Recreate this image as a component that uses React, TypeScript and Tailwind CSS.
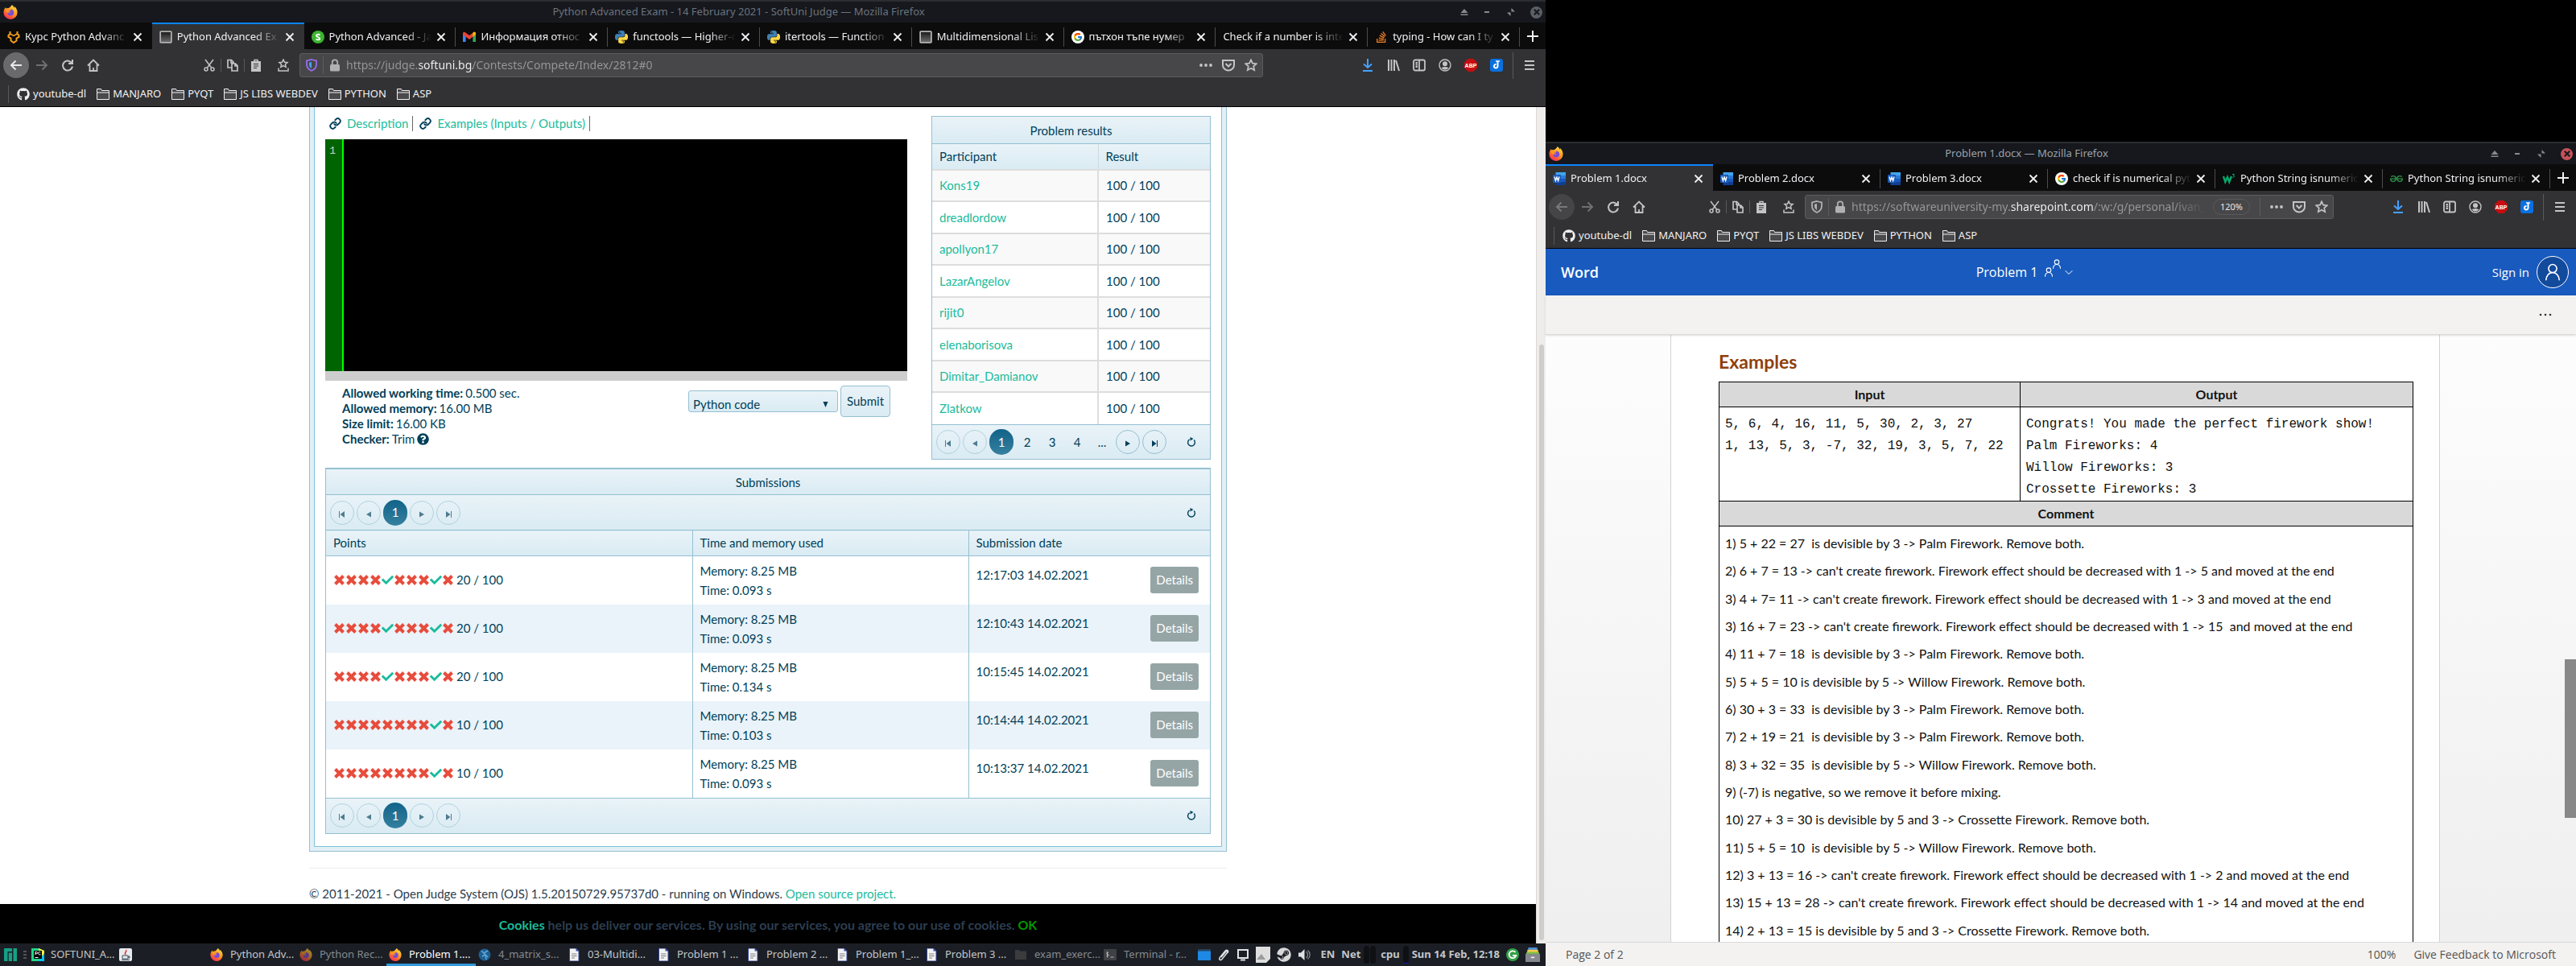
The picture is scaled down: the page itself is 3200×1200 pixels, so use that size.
import type { ReactNode } from "react";
import { FaCheck, FaQuestionCircle, FaGithub, FaStackOverflow, FaSteam } from "react-icons/fa";
import { FcGoogle } from "react-icons/fc";
import { SiGeeksforgeeks } from "react-icons/si";
import { Link as LinkIcon } from "lucide-react";

type Glyph = { className?: string };

/* ---------- brand marks ---------- */

function FirefoxMark({ className = "size-4" }: Glyph) {
  return (
    <svg viewBox="0 0 16 16" className={className} aria-hidden="true">
      <defs>
        <linearGradient id="ffBody" x1="0.8" y1="0" x2="0.2" y2="1">
          <stop offset="0" stopColor="#ffe14d" />
          <stop offset="0.45" stopColor="#ff9a1f" />
          <stop offset="0.8" stopColor="#ff4c3b" />
          <stop offset="1" stopColor="#e3208a" />
        </linearGradient>
      </defs>
      <path
        d="M9.6 0c1.5 1 2.2 2.2 2.5 3.3.3-.4.4-.9.3-1.5 2 1.7 3.2 4 3.2 6.5A7.5 7.5 0 0 1 8 16 7.6 7.6 0 0 1 .4 8.5c0-2.5 1-4.5 2.3-5.9 0 .7.2 1.2.6 1.5C4 3.5 5.2 3.4 6 3.5 7.5 2.8 8.8 1.6 9.6 0Z"
        fill="url(#ffBody)"
      />
      <path d="M8.2 4.9c2 0 3.5 1.5 3.5 3.5a3.5 3.5 0 0 1-7 .1c0-.8.3-1.4.7-1.9.6.5 1.5.3 2.2 0 .5-.2.9-.7.6-1.7Z" fill="#7a4bd6" />
      <path d="M3.3 4.3c1.5-.7 3.3-.2 4.2.9-.2.8-1.7 1-1.8 1.8.7.8 2 .4 2.6.9-1.2 1.3-3.7.9-4.7-.6-.5-.8-.6-2-.3-3Z" fill="#ff9a1f" />
    </svg>
  );
}

function PythonMark({ className = "size-4" }: Glyph) {
  const half =
    "M14.25.18l.9.2.73.26.59.3.45.32.34.34.25.34.16.33.1.3.04.26.02.2-.01.13V8.5l-.05.63-.13.55-.21.46-.26.38-.3.31-.33.25-.35.19-.35.14-.33.1-.3.07-.26.04-.21.02H8.77l-.69.05-.59.14-.5.22-.41.27-.33.32-.27.35-.2.36-.15.37-.1.35-.07.32-.04.27-.02.21v3.06H3.17l-.21-.03-.28-.07-.32-.12-.35-.18-.36-.26-.36-.36-.35-.46-.32-.59-.28-.73-.21-.88-.14-1.05-.05-1.23.06-1.22.16-1.04.24-.87.32-.71.36-.57.4-.44.42-.33.42-.24.4-.16.36-.1.32-.05.24-.01h.16l.06.01h8.16v-.83H6.18l-.01-2.75-.02-.37.05-.34.11-.31.17-.28.25-.26.31-.23.38-.2.44-.18.51-.15.58-.12.64-.1.71-.06.77-.04.84-.02 1.27.05zm-6.3 1.98l-.23.33-.08.41.08.41.23.34.33.22.41.09.41-.09.33-.22.23-.34.08-.41-.08-.41-.23-.33-.33-.22-.41-.09-.41.09z";
  return (
    <svg viewBox="0 0 24 24" className={className} aria-hidden="true">
      <path d={half} fill="#3f7fb5" />
      <path d={half} fill="#ffd845" transform="rotate(180 12 12)" />
    </svg>
  );
}

function WordMark({ className = "size-4" }: Glyph) {
  return (
    <svg viewBox="0 0 16 16" className={className} aria-hidden="true">
      <path d="M3.5 0H16v4H3.5z" fill="#41a5ee" />
      <path d="M3.5 4H16v4H3.5z" fill="#2b7cd3" />
      <path d="M3.5 8H16v4H3.5z" fill="#185abd" />
      <path d="M3.5 12H16v4H3.5z" fill="#103f91" />
      <rect y="3" width="10" height="10" rx="0.8" fill="#185abd" />
      <path d="m2 5.5 1.4 5L5 6l1.6 4.5 1.4-5" stroke="#fff" strokeWidth="1.4" fill="none" />
    </svg>
  );
}

function GmailMark({ className = "size-4" }: Glyph) {
  return (
    <svg viewBox="0 0 16 16" className={className} aria-hidden="true">
      <path d="M0 3.5V14h3.6V6z" fill="#4285f4" />
      <path d="M16 3.5V14h-3.6V6z" fill="#34a853" />
      <path d="M0 3.5C0 2 1.7 1.3 2.9 2.2L8 6l5.1-3.8C14.3 1.3 16 2 16 3.5V5L8 11 0 5z" fill="#ea4335" />
      <path d="M12.4 2.8 13.1 2.2C14.3 1.3 16 2 16 3.5V5l-3.6 2.7z" fill="#fbbc04" />
    </svg>
  );
}

function SoftUniMark({ className = "size-4" }: Glyph) {
  return (
    <svg viewBox="0 0 16 16" className={className} fill="none" stroke="#f5a01c" strokeWidth="2" aria-hidden="true">
      <path d="M3.5 1v3L1.5 6v2l3 1.5v3L8 15l3.5-2.5v-3l3-1.5V6l-2-2V1" />
      <path d="M3.5 4 8 6.5 12.5 4" strokeWidth="1.5" />
    </svg>
  );
}

function JudgeMark({ className = "size-4" }: Glyph) {
  return (
    <svg viewBox="0 0 16 16" className={className} aria-hidden="true">
      <defs>
        <linearGradient id="judgeScreen" x1="0" y1="0" x2="0" y2="1">
          <stop offset="0" stopColor="#1d1d1d" />
          <stop offset="1" stopColor="#6a6a6a" />
        </linearGradient>
      </defs>
      <rect x="0.5" y="0.5" width="15" height="15" rx="1.5" fill="#b4b4b4" stroke="#8a8a8a" />
      <rect x="2" y="2" width="12" height="12" fill="url(#judgeScreen)" />
    </svg>
  );
}

function GreenS({ className = "size-4" }: Glyph) {
  return (
    <svg viewBox="0 0 16 16" className={className} aria-hidden="true">
      <circle cx="8" cy="8" r="8" fill="#3cb52f" />
      <path d="M10.3 5.6C9.5 4.5 5.9 4.3 5.9 6.3S10.2 8 10.2 9.9s-3.6 1.9-4.6.5" stroke="#fff" strokeWidth="1.8" fill="none" />
    </svg>
  );
}

function W3Mark({ className = "size-4" }: Glyph) {
  return (
    <svg viewBox="0 0 16 16" className={className} fill="none" stroke="#04aa6d" aria-hidden="true">
      <path d="m1 5 2.3 7L6 6l2.3 6L11 5" strokeWidth="2.4" />
      <path d="M12 2.5h2.5L13.3 4c1.8 0 1.8 2.5-.8 2.2" strokeWidth="1" />
    </svg>
  );
}

function GoogleMark() {
  return (
    <span className="flex size-4 shrink-0 items-center justify-center rounded-full bg-white">
      <FcGoogle className="size-3" />
    </span>
  );
}

/* ---------- toolbar glyphs ---------- */

function Line({ children, className = "size-4", width = 2 }: { children: ReactNode; className?: string; width?: number }) {
  return (
    <svg viewBox="0 0 16 16" className={className} fill="none" stroke="currentColor" strokeWidth={width} aria-hidden="true">
      {children}
    </svg>
  );
}

const BackGlyph = () => <Line><path d="M15 8H2M7.5 2.5 2 8l5.5 5.5" /></Line>;
const ForwardGlyph = () => <Line><path d="M1 8h13M8.5 2.5 14 8l-5.5 5.5" /></Line>;
const ReloadGlyph = () => <Line><path d="M14 1v5H9M13.5 6A6 6 0 1 0 14 9.5" /></Line>;
const HomeGlyph = () => <Line width={1.8}><path d="M1 8.5 8 1.5l7 7M3.5 7v8h9V7M8 15v-4" /></Line>;
const CutGlyph = () => (
  <Line width={1.5}><path d="M3 1l7.5 10M13 1 5.5 11" /><circle cx="4" cy="13" r="2" /><circle cx="12" cy="13" r="2" /></Line>
);
const CopyGlyph = () => <Line width={1.7}><path d="M7 11H2V1.5h4.5L9 4v2M7 6h4.5L14 8.5V15H7zM6 2v3h3M11 6.5V9h3" /></Line>;
const PasteGlyph = () => (
  <svg viewBox="0 0 16 16" className="size-4" fill="none" stroke="currentColor" aria-hidden="true">
    <path d="M3 4h10v11H3z" fill="currentColor" strokeWidth="2" />
    <path d="M6 4V1.5h4V4" strokeWidth="1.5" />
    <path d="M5 6.5h6M5 9h6M5 11.5h4" stroke="#323234" />
  </svg>
);
const StarTrayGlyph = () => (
  <Line width={1.5}><path d="m8 1 1.5 3.2 3.5.4-2.6 2.3.7 3.4L8 8.6l-3.1 1.7.7-3.4L3 4.6l3.5-.4zM2 11.5V15h12v-3.5" /></Line>
);
const LockGlyph = () => (
  <svg viewBox="0 0 16 16" className="size-4" aria-hidden="true">
    <rect x="2" y="7" width="12" height="8.5" rx="1.5" fill="currentColor" />
    <path d="M4.8 7.5V4.5a3.2 3.2 0 0 1 6.4 0v3" stroke="currentColor" strokeWidth="1.8" fill="none" />
  </svg>
);
const DotsGlyph = () => (
  <svg viewBox="0 0 16 16" className="size-4" fill="currentColor" aria-hidden="true">
    <circle cx="2" cy="8" r="1.9" /><circle cx="8" cy="8" r="1.9" /><circle cx="14" cy="8" r="1.9" />
  </svg>
);
const PocketGlyph = () => <Line><path d="M1 2h14v6a7 6.5 0 0 1-14 0zM4.5 6 8 9.5 11.5 6" /></Line>;
const StarGlyph = () => <Line width={1.7}><path d="m8 1.3 2 4.4 4.8.5-3.6 3.2 1 4.8L8 11.8l-4.2 2.4 1-4.8-3.6-3.2 4.8-.5z" /></Line>;
const DownloadGlyph = () => <Line className="size-4 text-[#45a1ff]"><path d="M8 0v11M3 6.5 8 11l5-4.5M2 15h12" /></Line>;
const LibraryGlyph = () => <Line><path d="M2 1v14M5.5 1v14M9 1v14M11 2l4 13" /></Line>;
const SidebarGlyph = () => <Line width={1.8}><rect x="1" y="1.5" width="14" height="13" rx="2" /><path d="M8 2v12M3.5 5H6M3.5 7.5H6M3.5 10H6" /></Line>;
const AccountGlyph = () => (
  <svg viewBox="0 0 16 16" className="size-4" aria-hidden="true">
    <circle cx="8" cy="8" r="7" fill="none" stroke="currentColor" strokeWidth="1.4" />
    <circle cx="8" cy="6.2" r="3" fill="currentColor" />
    <path d="M3.5 11c1.5 0 2.5-1 4.5-1s3 1 4.5 1c-1 1.7-2.6 2.6-4.5 2.6S4.5 12.7 3.5 11Z" fill="currentColor" />
  </svg>
);
const AbpGlyph = () => (
  <svg viewBox="0 0 16 16" className="size-4" aria-hidden="true">
    <path d="M4.7 0h6.6L16 4.7v6.6L11.3 16H4.7L0 11.3V4.7z" fill="#c70d12" />
    <text x="8" y="10.8" textAnchor="middle" fontSize="7" fontWeight="700" fill="#fff" fontFamily="Liberation Sans, sans-serif">ABP</text>
  </svg>
);
const DownloaderGlyph = () => (
  <svg viewBox="0 0 16 16" className="size-4" aria-hidden="true">
    <rect width="16" height="16" rx="3" fill="#0a70e0" />
    <path d="M9.5 3v6.5a2.3 2.3 0 1 1-2-2.5" stroke="#fff" strokeWidth="2" fill="none" />
    <path d="M7 3h5" stroke="#fff" strokeWidth="1.5" />
  </svg>
);
const MenuGlyph = () => <Line><path d="M2 3h12M2 8h12M2 13h12" /></Line>;
const FolderGlyph = () => <Line width={1}><path d="M.5 14.5v-13h5l1 2h9v11zM.5 6h15" fill="#4a4a4c" /></Line>;
const CloseGlyph = () => <Line className="size-3" width={2.4}><path d="m2 2 12 12M14 2 2 14" /></Line>;

/* ---------- Firefox window ---------- */

type TabInfo = { title: string; icon?: ReactNode; active?: boolean };

function WindowTitle({ text, focused }: { text: string; focused: boolean }) {
  return (
    <header className={`flex h-7 shrink-0 items-center border-t-2 border-[#2b2d31] bg-[#16181d] pr-1 pl-1 ${focused ? "text-[#9aa1aa]" : "text-[#6c737d]"}`}>
      <FirefoxMark className="size-[18px]" />
      <h1 className="flex-1 text-center text-[13px]">{text}</h1>
      <div className="flex items-center gap-4 text-[#858a92]">
        <button aria-label="Shade" className="flex size-3 items-center justify-center">
          <svg viewBox="0 0 10 10" className="size-[10px]" fill="currentColor"><path d="M5 1l4.5 5h-9zM.5 7.5h9V9h-9z" /></svg>
        </button>
        <button aria-label="Minimize" className="flex size-3 items-center justify-center">
          <svg viewBox="0 0 10 10" className="size-[10px]" fill="currentColor"><path d="M2 4h6v2H2z" /></svg>
        </button>
        <button aria-label="Restore" className="flex size-4 items-center justify-center">
          <svg viewBox="0 0 10 10" className="size-[10px]" fill="currentColor"><path d="M5.5 0v4.500H10zM0 5.500h4.500V10z" /></svg>
        </button>
        <button aria-label="Close window" className={`flex size-[15px] items-center justify-center rounded-full text-[#16181d] ${focused ? "bg-[#c7525a]" : "bg-[#5b5f66]"}`}>
          <svg viewBox="0 0 10 10" className="size-2" stroke="currentColor" strokeWidth="2.5"><path d="m1 1 8 8M9 1 1 9" /></svg>
        </button>
      </div>
    </header>
  );
}

function TabStrip({ tabs }: { tabs: TabInfo[] }) {
  return (
    <nav aria-label="Tabs" className="flex h-[33px] shrink-0 bg-[#0c0c0d] text-[#f0f0f2]">
      {tabs.map((tab, i) => {
        const divider = !tab.active && !tabs[i + 1]?.active;
        return (
          <div
            key={tab.title + i}
            className={`relative flex min-w-0 flex-1 items-center border-t-2 pr-[10px] pl-[9px] ${tab.active ? "border-[#0a84ff] bg-[#323234]" : "border-transparent"}`}
          >
            <button className="flex min-w-0 flex-1 items-center gap-1.5 text-left text-[13px]">
              {tab.icon}
              <span className="min-w-0 flex-1 overflow-hidden whitespace-nowrap [mask-image:linear-gradient(to_right,black_75%,transparent)]">{tab.title}</span>
            </button>
            <button aria-label={`Close ${tab.title}`} className="ml-1 flex size-4 shrink-0 items-center justify-center"><CloseGlyph /></button>
            {divider && <span className="absolute top-1 right-0 h-6 w-px bg-[#4c4c4e]" />}
          </div>
        );
      })}
      <button aria-label="New tab" className="flex w-8 shrink-0 items-center justify-center">
        <Line className="size-4"><path d="M8 1v14M1 8h14" /></Line>
      </button>
    </nav>
  );
}

const Divider = ({ tall = false }: { tall?: boolean }) => (
  <span className={tall ? "h-[33px] w-px bg-[#59595b]" : "h-4 w-px bg-[#59595b]"} />
);

function IconButton({ label, children, dim }: { label: string; children: ReactNode; dim?: boolean }) {
  return (
    <button aria-label={label} className={`flex w-8 shrink-0 items-center justify-center ${dim ? "text-[#6f6f71]" : ""}`}>
      {children}
    </button>
  );
}

function NavigationBar({ url, urlStyle, secure, zoom, spacer, canGoBack }: {
  url: string; urlStyle: string; secure: boolean; zoom?: string; spacer: string; canGoBack: boolean;
}) {
  return (
    <div className="flex h-10 shrink-0 items-center bg-[#323234] pl-1 text-[#c4c4c6]">
      <button aria-label="Back" className={`flex size-8 shrink-0 items-center justify-center rounded-full ${canGoBack ? "bg-[#6a6a6c] text-[#e8e8ea]" : "bg-[#454547] text-[#79797b]"}`}><BackGlyph /></button>
      <IconButton label="Forward" dim><ForwardGlyph /></IconButton>
      <IconButton label="Reload"><ReloadGlyph /></IconButton>
      <IconButton label="Home"><HomeGlyph /></IconButton>
      <span className={`shrink-0 ${spacer}`} />
      <button aria-label="Cut" className="flex w-7 shrink-0 items-center justify-center"><CutGlyph /></button>
      <Divider />
      <button aria-label="Copy" className="flex w-7 shrink-0 items-center justify-center"><CopyGlyph /></button>
      <Divider />
      <button aria-label="Paste" className="flex w-7 shrink-0 items-center justify-center"><PasteGlyph /></button>
      <span className="w-1" />
      <IconButton label="Bookmarks menu"><StarTrayGlyph /></IconButton>
      <form className="ml-1 flex h-[30px] min-w-0 flex-1 items-center rounded-[3px] border border-[#5c5c5e] bg-[#474749]">
        <button type="button" aria-label="Tracking protection" className="flex w-7 shrink-0 items-center justify-center">
          <svg viewBox="0 0 16 16" className="size-4" fill="none" stroke={secure ? "#9a6cf0" : "#b1b1b3"} strokeWidth="1.8" aria-hidden="true">
            <path d="M8 1 14 2.5v4.5c0 4-2.5 6.5-6 8-3.5-1.5-6-4-6-8V2.5z" />
            <path d="M8 4v8C6 11 5 9 5 7V4.8z" fill={secure ? "#45a1ff" : "#b1b1b3"} stroke="none" />
          </svg>
        </button>
        <span className="h-[22px] w-px bg-[#5c5c5e]" />
        <button type="button" aria-label="Site information" className="flex w-7 shrink-0 items-center justify-center text-[#b1b1b3]"><LockGlyph /></button>
        <label className="flex min-w-0 flex-1">
          <span className="sr-only">Address</span>
          <input type="text" defaultValue={url} className={`w-full bg-clip-text text-[14px] leading-6 text-transparent outline-none ${urlStyle}`} />
        </label>
        {zoom && (
          <>
            <button type="button" className="mx-3 rounded-full border border-[#59595b] px-2 text-[11px] leading-[18px] text-[#e8e8ea]">{zoom}</button>
            <span className="mr-1.5 h-[22px] w-px bg-[#5c5c5e]" />
          </>
        )}
        <button type="button" aria-label="Page actions" className="flex w-7 shrink-0 items-center justify-center"><DotsGlyph /></button>
        <button type="button" aria-label="Save to Pocket" className="flex w-7 shrink-0 items-center justify-center"><PocketGlyph /></button>
        <button type="button" aria-label="Bookmark page" className="flex w-7 shrink-0 items-center justify-center"><StarGlyph /></button>
      </form>
      <span className={`shrink-0 ${spacer}`} />
      <IconButton label="Downloads"><DownloadGlyph /></IconButton>
      <IconButton label="Library"><LibraryGlyph /></IconButton>
      <IconButton label="Sidebars"><SidebarGlyph /></IconButton>
      <IconButton label="Account"><AccountGlyph /></IconButton>
      <IconButton label="Adblock Plus"><AbpGlyph /></IconButton>
      <IconButton label="Downloader"><DownloaderGlyph /></IconButton>
      <span className="w-1" />
      <Divider tall />
      <button aria-label="Menu" className="flex w-10 shrink-0 items-center justify-center"><MenuGlyph /></button>
    </div>
  );
}

const bookmarks = ["MANJARO", "PYQT", "JS LIBS WEBDEV", "PYTHON", "ASP"];

function BookmarksBar() {
  return (
    <nav aria-label="Bookmarks" className="flex h-8 shrink-0 items-center border-b border-black bg-[#323234] pl-[10px] text-[13px] text-[#f0f0f2]">
      <span className="h-[22px] w-px bg-[#59595b]" />
      <a href="#youtube-dl" className="ml-[10px] flex items-center gap-1">
        <FaGithub className="size-4" />youtube-dl
      </a>
      {bookmarks.map((name) => (
        <button key={name} className="ml-[13px] flex items-center gap-1"><FolderGlyph />{name}</button>
      ))}
    </nav>
  );
}

/* ---------- judge page ---------- */

const band = "bg-linear-to-b from-[#e9f3f8] to-[#daebf3]";

type PagerSign = "first" | "prev" | "next" | "last";

const pagerPaths: Record<PagerSign, string> = {
  first: "M1 1h1v8H1zM8 1v8L2.5 5z",
  prev: "M8 1.5v7L2 5z",
  next: "M2 1.5v7L8 5z",
  last: "M2 1v8l5.5-4zM8 1h1v8H8z",
};

function PagerArrow({ sign, faded }: { sign: PagerSign; faded?: boolean }) {
  return (
    <button aria-label={`${sign} page`} disabled={faded} className={`flex size-[30px] items-center justify-center rounded-full border border-[#94c0d2] ${faded ? "opacity-65" : ""}`}>
      <svg viewBox="0 0 10 10" className="mt-1 size-[10px]" fill="#003f59"><path d={pagerPaths[sign]} /></svg>
    </button>
  );
}

const CurrentPage = () => (
  <button aria-current="page" className="flex h-8 w-[30px] items-center justify-center rounded-full bg-linear-to-b from-[#0f6389] to-[#35809f] text-white">1</button>
);

const Refresh = () => (
  <button aria-label="Refresh" className="mr-[17px] ml-auto text-[#003f59]">
    <svg viewBox="0 0 12 12" className="size-3" fill="none" stroke="currentColor" strokeWidth="1.4">
      <path d="M9.2 3.6A4.4 4.4 0 1 1 3.6 2.9" /><path d="M4.5 0v4.5L8.500 2z" fill="currentColor" stroke="none" />
    </svg>
  </button>
);

const participants = ["Kons19", "dreadlordow", "apollyon17", "LazarAngelov", "rijit0", "elenaborisova", "Dimitar_Damianov", "Zlatkow"];

function ProblemResults() {
  return (
    <section className="flex w-[347px] shrink-0 flex-col border border-[#94c0d2]">
      <h2 className={`h-[34px] border-b border-[#94c0d2] text-center leading-[34px] ${band}`}>Problem results</h2>
      <table className="w-full border-collapse text-left">
        <thead>
          <tr className={`h-8 ${band}`}>
            <th className="w-[206px] border-r border-[#cfd9de] px-[9px] font-normal">Participant</th>
            <th className="px-[9px] font-normal">Result</th>
          </tr>
        </thead>
        <tbody>
          {participants.map((name) => (
            <tr key={name} className="border-t-2 border-[#ddd] odd:h-[39px] odd:bg-[#f9f9f9] even:h-10">
              <td className="border-r-2 border-[#ddd] px-[9px]"><a href={`#${name}`} className="text-[#1abc9c]">{name}</a></td>
              <td className="px-[9px]">100 / 100</td>
            </tr>
          ))}
        </tbody>
      </table>
      <div className={`flex h-[43px] items-center gap-[3px] border-t border-[#94c0d2] pl-[5px] ${band}`}>
        <PagerArrow sign="first" faded />
        <PagerArrow sign="prev" faded />
        <CurrentPage />
        {["2", "3", "4", "..."].map((page) => (
          <button key={page} className="w-7">{page}</button>
        ))}
        <PagerArrow sign="next" />
        <PagerArrow sign="last" />
        <Refresh />
      </div>
    </section>
  );
}

const submissions = [
  { tests: "xxxxvxxxvx", points: 20, time: "0.093", date: "12:17:03 14.02.2021" },
  { tests: "xxxxvxxxvx", points: 20, time: "0.093", date: "12:10:43 14.02.2021" },
  { tests: "xxxxvxxxvx", points: 20, time: "0.134", date: "10:15:45 14.02.2021" },
  { tests: "xxxxxxxxvx", points: 10, time: "0.103", date: "10:14:44 14.02.2021" },
  { tests: "xxxxxxxxvx", points: 10, time: "0.093", date: "10:13:37 14.02.2021" },
];

const FailedTest = () => (
  <svg viewBox="0 0 15 15" className="size-[15px]" fill="none" stroke="#e74c3c" strokeWidth="4" aria-label="failed test">
    <path d="m2.500 2.500 10 10M12.500 2.500l-10 10" />
  </svg>
);

function SubmissionsPager() {
  return (
    <div className={`flex h-[43px] items-center gap-[3px] pl-[5px] ${band}`}>
      <PagerArrow sign="first" faded />
      <PagerArrow sign="prev" faded />
      <CurrentPage />
      <PagerArrow sign="next" faded />
      <PagerArrow sign="last" faded />
      <Refresh />
    </div>
  );
}

function Submissions() {
  return (
    <section className="mt-[10px] border border-t-2 border-[#94c0d2]">
      <h2 className={`h-8 border-b border-[#94c0d2] text-center leading-8 ${band}`}>Submissions</h2>
      <SubmissionsPager />
      <table className="w-full table-fixed border-collapse text-left">
        <thead>
          <tr className={`h-8 border-y border-[#94c0d2] ${band}`}>
            <th className="w-[455px] border-r border-[#94c0d2] px-[9px] font-normal">Points</th>
            <th className="w-[343px] border-r border-[#94c0d2] px-[9px] font-normal">Time and memory used</th>
            <th className="px-[9px] font-normal">Submission date</th>
          </tr>
        </thead>
        <tbody>
          {submissions.map((s) => (
            <tr key={s.date} className="h-[60px] even:bg-[#eaf3f9]">
              <td className="border-r border-[#94c0d2] px-[9px]">
                <div className="flex items-center">
                  {[...s.tests].map((t, i) => (t === "v" ? <FaCheck key={i} className="size-[15px] text-[#1abc9c]" /> : <FailedTest key={i} />))}
                  <span className="ml-[3px]">{s.points} / 100</span>
                </div>
              </td>
              <td className="border-r border-[#94c0d2] px-[9px] leading-6">
                <p>Memory: 8.25 MB</p>
                <p>Time: {s.time} s</p>
              </td>
              <td className="px-[9px]">
                <div className="flex justify-between pr-[5px]">
                  <span>{s.date}</span>
                  <button className="rounded-[3px] bg-[#95a5a6] px-[7px] py-1.5 leading-[21px] text-white">Details</button>
                </div>
              </td>
            </tr>
          ))}
        </tbody>
      </table>
      <div className="border-t border-[#94c0d2]"><SubmissionsPager /></div>
    </section>
  );
}

const limits = [
  ["Allowed working time:", "0.500 sec."],
  ["Allowed memory:", "16.00 MB"],
  ["Size limit:", "16.00 KB"],
  ["Checker:", "Trim"],
];

function CodePanel() {
  return (
    <section className="min-w-0 flex-1">
      <nav aria-label="Resources" className="flex h-[19px] items-center pl-[5px]">
        {["Description", "Examples (Inputs / Outputs)"].map((label) => (
          <span key={label} className="mr-2 flex h-[19px] items-center border-r border-[#666] pr-[5px]">
            <LinkIcon className="mr-[7px] size-[15px]" strokeWidth={3} />
            <a href={`#${label}`} className="text-[#1abc9c]">{label}</a>
          </span>
        ))}
      </nav>
      <div className="mt-[10px] flex h-72 bg-black">
        <div className="w-[23px] border-r-2 border-[#00ff00] bg-[#006400] pt-1 pr-2 text-right font-['Liberation_Mono',monospace] text-[13px] text-[#d0d0d0]">1</div>
        <textarea aria-label="Code" spellCheck={false} className="flex-1 resize-none bg-black p-1 font-['Liberation_Mono',monospace] text-[13px] text-[#f8f8f8] outline-none" />
      </div>
      <div className="h-3 bg-[#cdcdcd]" />
      <div className="flex items-start px-[21px]">
        <dl className="mt-1.5 flex-1 leading-[19px]">
          {limits.map(([name, value]) => (
            <div key={name} className="flex items-center gap-[3px]">
              <dt className="font-bold">{name}</dt>
              <dd>{value}</dd>
              {value === "Trim" && <FaQuestionCircle aria-label="Checker help" className="size-[15px]" />}
            </div>
          ))}
        </dl>
        <div className="mt-1.5 flex items-end gap-[3px]">
          <label className="relative mb-1.5 flex">
            <span className="sr-only">Language</span>
            <select className={`h-[27px] w-[186px] appearance-none rounded-[3px] border border-[#94c0d2] px-[5px] pt-1.5 ${band}`}>
              <option>Python code</option>
            </select>
            <svg viewBox="0 0 8 8" className="pointer-events-none absolute top-[14px] right-3 size-[7px]" fill="#003f59"><path d="M.5 0h7L4 8z" /></svg>
          </label>
          <button className={`h-[39px] w-[62px] rounded border border-[#94c0d2] ${band}`}>Submit</button>
        </div>
      </div>
    </section>
  );
}

function JudgePage() {
  return (
    <div className="flex min-h-0 flex-1 bg-white">
      <div className="flex min-w-0 flex-1 flex-col">
        <main className="mx-auto flex min-h-0 w-full max-w-[1140px] flex-1 flex-col overflow-hidden font-['Lato',sans-serif] text-[15px] leading-[21px] text-[#003f59]">
          <div className="border border-t-0 border-[#94c0d2] bg-[#e2eff6] px-[5px] pb-[5px]">
            <div className="border border-t-0 border-[#7cc3dc] bg-white px-[13px] pt-[11px] pb-[15px]">
              <div className="flex items-start gap-[30px]">
                <CodePanel />
                <ProblemResults />
              </div>
              <Submissions />
            </div>
          </div>
          <footer className="mt-5 border-t border-[#eee] pt-[21px] text-[#2c3e50]">
            © 2011-2021 - Open Judge System (OJS) 1.5.20150729.95737d0 - running on Windows. <a href="#source" className="text-[#1abc9c]">Open source project.</a>
          </footer>
        </main>
        <p className="h-[49px] shrink-0 bg-black text-center font-['Lato',sans-serif] text-[16px] leading-[52px] font-bold text-[#2c3e50]">
          <a href="#cookies" className="text-[#1abc9c]">Cookies</a> help us deliver our services. By using our services, you agree to our use of cookies. <button className="text-[#090]">OK</button>
        </p>
      </div>
      <div className="flex w-3 shrink-0 flex-col border-l border-[#dad8d6] bg-[#eeedec] px-0.5 pb-1">
        <span className="mt-auto h-[740px] w-1.5 self-center rounded-full bg-[#cfcdcc]" />
      </div>
    </div>
  );
}

/* ---------- taskbar ---------- */

const DocIcon = () => (
  <svg viewBox="0 0 16 16" className="size-4" aria-hidden="true">
    <path d="M2.5 0h8L14 3.5V16H2.5z" fill="#f2f2f2" stroke="#33479f" />
    <path d="M10.5 0 14 3.5h-3.5z" fill="#33479f" />
    <path d="M5 7h6.5M5 9.5h6.5M5 12h4" stroke="#7a7a7a" />
  </svg>
);

const PyCharmIcon = () => (
  <svg viewBox="0 0 16 16" className="size-4" aria-hidden="true">
    <path d="M0 0h9l7 3v13H0z" fill="#21d789" /><path d="M9 0l7 3v8l-5 5z" fill="#fcf84a" /><path d="M16 6v10H8z" fill="#07c3f2" />
    <rect x="3" y="3" width="10" height="10" /><path d="M5 8V4.5h1.5a1 1 0 0 1 0 2.2H5M11.5 5a1.7 1.7 0 1 0 0 2.5M4.5 11.5h4" stroke="#fff" fill="none" />
  </svg>
);

const GlobeIcon = () => (
  <svg viewBox="0 0 16 16" className="size-4" aria-hidden="true">
    <circle cx="8" cy="8" r="7.5" fill="#1e5f92" /><path d="M4 3l5 5-4 2M12 3 7 6l5 5M9 8l1 6" stroke="#5fa8d8" strokeWidth="1.5" fill="none" />
  </svg>
);

const FolderIcon = () => (
  <svg viewBox="0 0 16 16" className="size-4" aria-hidden="true"><path d="M1 2h5l1 1.5h8V14H1z" fill="#3a3b3d" /></svg>
);

const TerminalIcon = () => (
  <svg viewBox="0 0 16 16" className="size-4" aria-hidden="true">
    <rect y="1" width="16" height="14" rx="1" fill="#3f4144" /><path d="M6 5.5c-3-1-3 2-1 2s2 3-1.5 2M4.5 4v7.5M8.5 11h4" stroke="#b5b5b5" fill="none" />
  </svg>
);

const tasks: { label: string; icon: ReactNode; tone: string }[] = [
  { label: "Python Adv...", icon: <FirefoxMark />, tone: "text-[#c3c6ca]" },
  { label: "Python Rec...", icon: <FirefoxMark className="size-4 opacity-60" />, tone: "text-[#858a90]" },
  { label: "Problem 1....", icon: <FirefoxMark />, tone: "text-white border-b-[3px] border-[#3498db] pt-[3px]" },
  { label: "4_matrix_s...", icon: <GlobeIcon />, tone: "text-[#858a90]" },
  { label: "03-Multidi...", icon: <DocIcon />, tone: "text-[#c3c6ca]" },
  { label: "Problem 1 ...", icon: <DocIcon />, tone: "text-[#c3c6ca]" },
  { label: "Problem 2 ...", icon: <DocIcon />, tone: "text-[#c3c6ca]" },
  { label: "Problem 1_...", icon: <DocIcon />, tone: "text-[#c3c6ca]" },
  { label: "Problem 3 ...", icon: <DocIcon />, tone: "text-[#c3c6ca]" },
  { label: "exam_exerc...", icon: <FolderIcon />, tone: "text-[#858a90]" },
  { label: "Terminal - r...", icon: <TerminalIcon />, tone: "text-[#858a90]" },
];

function Taskbar() {
  return (
    <footer className="flex h-7 shrink-0 items-stretch bg-[#1b1e24] text-[13px] whitespace-nowrap text-[#c3c6ca] [&_svg]:shrink-0">
      <button aria-label="Applications" className="flex items-center pl-[5px]">
        <svg viewBox="0 0 16 16" className="size-4" fill="#16a085" aria-hidden="true"><path d="M0 0h10v4H4.500v12H0zM5.700 5.500H10V16H5.700zM11.500 0H16v16h-4.500z" /></svg>
      </button>
      <span className="ml-2 flex items-center">
        <svg viewBox="0 0 4 12" className="h-3 w-1" stroke="#8a8d92"><path d="M0 2h4M0 6h4M0 10h4" /></svg>
      </span>
      <button className="ml-1.5 flex w-[109px] shrink-0 items-center gap-2"><PyCharmIcon />SOFTUNI_A...</button>
      <button aria-label="Java" className="flex w-[110px] shrink-0 items-center">
        <svg viewBox="0 0 16 16" className="size-4" aria-hidden="true"><rect width="16" height="16" rx="2" fill="#e8ebee" /><path d="M8.5 2c2 2-3 3-.5 6" stroke="#d33" strokeWidth="1.5" fill="none" /><path d="M4 9h7v4H4zM11 10h2v2h-2M3 14.5h10" stroke="#3a4a5a" fill="none" /></svg>
      </button>
      {tasks.map((t) => (
        <button key={t.label} className={`flex w-[111px] shrink-0 items-center gap-[9px] pl-[3px] ${t.tone}`}>
          {t.icon}{t.label}
        </button>
      ))}
      <div className="ml-auto flex items-center gap-2 pr-[7px]">
        <svg viewBox="0 0 16 16" className="size-4"><path d="M0 1h16v14H0z" fill="#1e88e5" /><path d="M0 1h16v2.5H0z" fill="#26435c" /></svg>
        <svg viewBox="0 0 16 16" className="size-4" fill="none" stroke="#dfe1e3" strokeWidth="1.5"><path d="m5 11 6-7c1-1 2.5 0 1.5 1.5L6 13.5c-2 2.2-4.5 0-2.7-2L10 3.2C12 1 15 3 13 5.5" /></svg>
        <svg viewBox="0 0 16 16" className="size-4" fill="none" stroke="#dfe1e3" strokeWidth="2"><path d="M2 2h12v10H2z" /><path d="M5 14.5h6" /></svg>
        <svg viewBox="0 0 18 20" className="h-5 w-[18px]"><path d="M0 0h18v15l-5 5H0z" fill="#dedede" /><path d="m1 16 6-7 5 7z" fill="#9c9c9c" /></svg>
        <FaSteam className="size-[18px] text-[#d8d8d8]" />
        <svg viewBox="0 0 16 16" className="size-4" fill="#dfe1e3"><path d="M1 5.5h3L8.5 1v14L4 10.5H1z" /><path d="M10.5 4a5 5 0 0 1 0 8M12.5 2.5a7 7 0 0 1 0 11" fill="none" stroke="#8a8d92" strokeWidth="1.2" /></svg>
        <span className="ml-1 font-bold">EN</span>
        <span className="font-bold">Net</span>
        <span className="-mx-1 flex gap-px"><i className="h-[22px] w-[7px] rounded-sm bg-[#0e1013]" /><i className="h-[22px] w-[7px] rounded-sm bg-[#0e1013]" /></span>
        <span className="ml-0.5 font-bold">cpu</span>
        <span className="-mx-1 h-[22px] w-[7px] rounded-sm border-b border-[#1616d8] bg-[#0e1013]" />
        <time className="font-bold">Sun 14 Feb, 12:18</time>
        <svg viewBox="0 0 16 16" className="size-4"><circle cx="8" cy="8" r="8" fill="#34a048" /><path d="M11.5 5a4.4 4.4 0 1 0 .8 4H8" stroke="#fff" strokeWidth="1.8" fill="none" /></svg>
        <svg viewBox="0 0 16 16" className="size-[18px]"><path d="M3 0h10v3H3z" fill="#4b8fd8" /><path d="M2 2.5h12v3H2z" fill="#f2c84b" /><path d="M1 5h14v3H1z" fill="#7bc043" /><path d="M0 7h16v9H0z" fill="#85898e" /><path d="M6 11h4" stroke="#eee" strokeWidth="1.5" /></svg>
      </div>
    </footer>
  );
}

/* ---------- Word document ---------- */

const comments = [
  "1) 5 + 22 = 27  is devisible by 3 -> Palm Firework. Remove both.",
  "2) 6 + 7 = 13 -> can't create firework. Firework effect should be decreased with 1 -> 5 and moved at the end",
  "3) 4 + 7= 11 -> can't create firework. Firework effect should be decreased with 1 -> 3 and moved at the end",
  "3) 16 + 7 = 23 -> can't create firework. Firework effect should be decreased with 1 -> 15  and moved at the end",
  "4) 11 + 7 = 18  is devisible by 3 -> Palm Firework. Remove both.",
  "5) 5 + 5 = 10 is devisible by 5 -> Willow Firework. Remove both.",
  "6) 30 + 3 = 33  is devisible by 3 -> Palm Firework. Remove both.",
  "7) 2 + 19 = 21  is devisible by 3 -> Palm Firework. Remove both.",
  "8) 3 + 32 = 35  is devisible by 5 -> Willow Firework. Remove both.",
  "9) (-7) is negative, so we remove it before mixing.",
  "10) 27 + 3 = 30 is devisible by 5 and 3 -> Crossette Firework. Remove both.",
  "11) 5 + 5 = 10  is devisible by 5 -> Willow Firework. Remove both.",
  "12) 3 + 13 = 16 -> can't create firework. Firework effect should be decreased with 1 -> 2 and moved at the end",
  "13) 15 + 13 = 28 -> can't create firework. Firework effect should be decreased with 1 -> 14 and moved at the end",
  "14) 2 + 13 = 15 is devisible by 5 and 3 -> Crossette Firework. Remove both.",
];

const PersonPath = () => <path d="M8 8.5a3.7 3.7 0 1 0 0-7.4 3.7 3.7 0 0 0 0 7.4ZM2 15.5c0-4 2.5-7 6-7s6 3 6 7" />;

function WordPage() {
  return (
    <div className="flex min-h-0 flex-1 flex-col bg-[#f3f2f1] font-['Open_Sans',sans-serif]">
      <header className="flex h-[58px] shrink-0 items-center bg-[#185abd] pr-[9px] pl-[19px] text-white">
        <a href="#word" className="flex-1 text-[18px] font-semibold">Word</a>
        <button className="mr-[100px] flex items-center gap-2 text-[16px]">
          Problem 1
          <span className="-mt-2.5 flex items-start">
            <Line className="mt-2.5 size-3" width={1.5}><PersonPath /></Line>
            <Line className="-ml-0.5 size-3" width={1.5}><PersonPath /></Line>
          </span>
          <Line className="-ml-1 size-2.5" width={1.6}><path d="m1 5 7 7 7-7" /></Line>
        </button>
        <div className="flex flex-1 justify-end">
          <button className="flex items-center gap-[9px] text-[15px]">
            Sign in
            <span className="flex size-10 items-center justify-center rounded-full border border-white bg-[#124a9c]">
              <Line className="size-[22px]" width={1.2}><PersonPath /></Line>
            </span>
          </button>
        </div>
      </header>
      <div className="relative z-10 flex h-[49px] shrink-0 items-center justify-end border-b border-[#dcdad8] bg-[#f3f2f1] pr-[30px] text-[#333] shadow-sm">
        <button aria-label="More commands">
          <svg viewBox="0 0 16 16" className="size-4" fill="currentColor"><circle cx="2" cy="8" r="1.3" /><circle cx="8" cy="8" r="1.3" /><circle cx="14" cy="8" r="1.3" /></svg>
        </button>
      </div>
      <div className="relative flex min-h-0 flex-1 justify-center overflow-hidden bg-linear-to-b from-[#fdfdfd] to-[#efefef] pr-[14px]">
        <article className="w-[956px] border-x border-[#d2d2d2] bg-white pt-4 pr-8 pl-[59px] text-[#111]">
          <h2 className="h-[42px] font-['Lato',sans-serif] text-[23px] leading-[34px] font-bold text-[#8f400b]">Examples</h2>
          <table className="w-full border-collapse border border-black font-['Lato',sans-serif] text-[16px]">
            <thead>
              <tr className="h-[31px] bg-[#d9d9d9]">
                <th className="w-[374px] border border-black">Input</th>
                <th className="border border-black">Output</th>
              </tr>
            </thead>
            <tbody>
              <tr className="align-top font-['Liberation_Mono',monospace] leading-[27px]">
                <td className="border border-black px-[7px] pt-2">
                  <p>5, 6, 4, 16, 11, 5, 30, 2, 3, 27</p>
                  <p>1, 13, 5, 3, -7, 32, 19, 3, 5, 7, 22</p>
                </td>
                <td className="border border-black px-[7px] pt-2">
                  <p>Congrats! You made the perfect firework show!</p>
                  <p>Palm Fireworks: 4</p>
                  <p>Willow Fireworks: 3</p>
                  <p>Crossette Fireworks: 3</p>
                </td>
              </tr>
              <tr className="h-[31px] bg-[#d9d9d9]">
                <th colSpan={2} className="border border-black">Comment</th>
              </tr>
              <tr>
                <td colSpan={2} className="border border-black px-[7px] pt-1">
                  <div className="flex h-[515px] flex-col">
                    {comments.map((line) => (
                      <p key={line} className="flex flex-1 items-center whitespace-pre">{line}</p>
                    ))}
                  </div>
                </td>
              </tr>
            </tbody>
          </table>
        </article>
        <span className="absolute right-0 bottom-[154px] h-[197px] w-[14px] bg-[#888]" />
      </div>
      <footer className="flex h-[30px] shrink-0 items-center gap-[22px] border-t border-[#dcdad8] px-[25px] text-[14px] text-[#555]">
        <span className="flex-1">Page 2 of 2</span>
        <button>100%</button>
        <button>Give Feedback to Microsoft</button>
      </footer>
    </div>
  );
}

/* ---------- desktop ---------- */

const judgeTabs: TabInfo[] = [
  { title: "Курс Python Advanc", icon: <SoftUniMark className="size-4 shrink-0" /> },
  { title: "Python Advanced Ex", icon: <JudgeMark className="size-4 shrink-0" />, active: true },
  { title: "Python Advanced - Ja", icon: <GreenS className="size-4 shrink-0" /> },
  { title: "Информация относ", icon: <GmailMark className="size-4 shrink-0" /> },
  { title: "functools — Higher-o", icon: <PythonMark className="size-4 shrink-0" /> },
  { title: "itertools — Function", icon: <PythonMark className="size-4 shrink-0" /> },
  { title: "Multidimensional Lis", icon: <JudgeMark className="size-4 shrink-0" /> },
  { title: "пътхон тъпе нумер", icon: <GoogleMark /> },
  { title: "Check if a number is inte" },
  { title: "typing - How can I ty", icon: <FaStackOverflow className="size-4 shrink-0 text-[#f48024]" /> },
];

const wordTabs: TabInfo[] = [
  { title: "Problem 1.docx", icon: <WordMark className="size-4 shrink-0" />, active: true },
  { title: "Problem 2.docx", icon: <WordMark className="size-4 shrink-0" /> },
  { title: "Problem 3.docx", icon: <WordMark className="size-4 shrink-0" /> },
  { title: "check if is numerical pyt", icon: <GoogleMark /> },
  { title: "Python String isnumeric", icon: <W3Mark className="size-4 shrink-0" /> },
  { title: "Python String isnumeric", icon: <SiGeeksforgeeks className="size-4 shrink-0 text-[#2f8d46]" /> },
];

export default function App() {
  return (
    <div className="flex h-screen w-full overflow-hidden bg-black font-['Noto_Sans',sans-serif] text-[13px]">
      <div className="flex w-3/5 min-w-0 flex-col">
        <WindowTitle text="Python Advanced Exam - 14 February 2021 - SoftUni Judge — Mozilla Firefox" focused={false} />
        <TabStrip tabs={judgeTabs} />
        <NavigationBar
          url="https://judge.softuni.bg/Contests/Compete/Index/2812#0"
          urlStyle="bg-[linear-gradient(to_right,#98989a_90px,#f5f5f7_90px,#f5f5f7_157px,#98989a_157px)]"
          secure
          canGoBack
          spacer="w-[114px]"
        />
        <BookmarksBar />
        <JudgePage />
        <Taskbar />
      </div>
      <div className="flex w-2/5 min-w-0 flex-col pt-44">
        <WindowTitle text="Problem 1.docx — Mozilla Firefox" focused />
        <TabStrip tabs={wordTabs} />
        <NavigationBar
          url="https://softwareuniversity-my.sharepoint.com/:w:/g/personal/ivan_"
          urlStyle="bg-[linear-gradient(to_right,#98989a_198px,#f5f5f7_198px,#f5f5f7_300px,#98989a_300px,#98989a_400px,#474749_440px)]"
          secure={false}
          canGoBack={false}
          zoom="120%"
          spacer="w-[64px]"
        />
        <BookmarksBar />
        <WordPage />
      </div>
    </div>
  );
}
